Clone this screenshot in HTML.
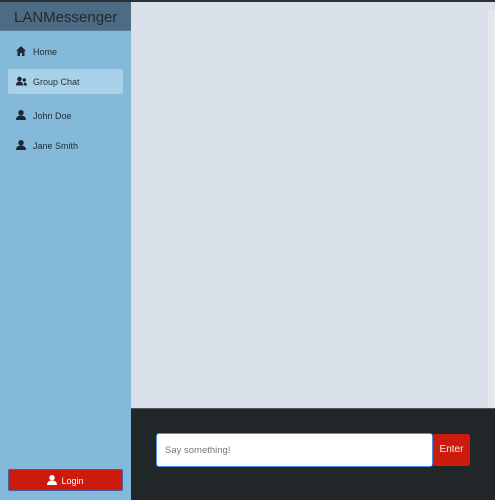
<!DOCTYPE html>
<html><head><style>
*{margin:0;padding:0;box-sizing:border-box}
body{width:495px;height:500px;overflow:hidden;font-family:"Liberation Sans",sans-serif;background:#d9e0ea;position:relative}
.top{position:absolute;left:0;top:0;width:495px;height:2px;background:#2a3035}
.side{position:absolute;left:0;top:2px;width:131px;height:498px;background:#85b9d9}
.hdr{height:29px;background:#4e6b84;color:#1f2a33;font-size:15px;padding:7px 0 0 14px;border-bottom:1px solid #5c7e98}
.item{position:absolute;left:8px;width:115px;height:25px;font-size:9px;color:#1e2a33;padding:8px 0 0 25px}
.item svg{position:absolute;left:8px;top:7px}
.sel{background:#a9d2ea;border-radius:2px}
.login{position:absolute;left:8px;top:469px;width:115px;height:22px;background:#cc1a0d;border:1px solid #4a5ba8;border-radius:2px;color:#fff;font-size:9px;text-align:center;padding-top:5px}
.sb{position:absolute;left:488px;top:10px;width:7px;height:398px;background:#e4e7ec}
.bot{position:absolute;left:131px;top:408px;width:364px;height:92px;background:#212629;border-top:1px solid #555}
.inp{position:absolute;left:156px;top:433px;width:277px;height:34px;background:#fff;border:1px solid #4a8fe0;border-radius:3px;font-size:9.5px;color:#777;padding:11px 0 0 8px}
.btn{position:absolute;left:433px;top:434px;width:37px;height:32px;background:#cc1a0d;border-radius:2px;color:#f3f3f3;font-size:10px;text-align:center;padding-top:10px}
</style></head><body>
<div class="top"></div>
<div class="side">
<div class="hdr">LANMessenger</div>
<div class="item" style="top:37px"><svg width="10" height="10" viewBox="0 0 10 10"><path d="M5 0L0 5h1.5v5h2.5V7h2v3h2.5V5H10z" fill="#1e2a33"/></svg>Home</div>
<div class="item sel" style="top:67px"><svg width="11" height="10" viewBox="0 0 11 9"><circle cx="3.5" cy="2.5" r="2.3" fill="#1e2a33"/><path d="M0 9c0-3 1.5-4 3.5-4S7 6 7 9z" fill="#1e2a33"/><circle cx="8.3" cy="3.5" r="1.7" fill="#1e2a33"/><path d="M7.6 9c0-2 .4-3 .4-3 1.5 0 3 .5 3 3z" fill="#1e2a33"/></svg>Group Chat</div>
<div class="item" style="top:101px"><svg width="10" height="10" viewBox="0 0 10 10"><circle cx="5" cy="2.7" r="2.7" fill="#1e2a33"/><path d="M0 10c0-3 2-4.5 5-4.5S10 7 10 10z" fill="#1e2a33"/></svg>John Doe</div>
<div class="item" style="top:131px"><svg width="10" height="10" viewBox="0 0 10 10"><circle cx="5" cy="2.7" r="2.7" fill="#1e2a33"/><path d="M0 10c0-3 2-4.5 5-4.5S10 7 10 10z" fill="#1e2a33"/></svg>Jane Smith</div>
</div>
<div class="login"><svg width="10" height="10" viewBox="0 0 10 10" style="vertical-align:-1px;margin-right:4px"><circle cx="5" cy="2.7" r="2.7" fill="#fff"/><path d="M0 10c0-3 2-4.5 5-4.5S10 7 10 10z" fill="#fff"/></svg>Login</div>
<div class="sb"></div>
<div class="bot"></div>
<div class="inp">Say something!</div>
<div class="btn">Enter</div>
</body></html>
